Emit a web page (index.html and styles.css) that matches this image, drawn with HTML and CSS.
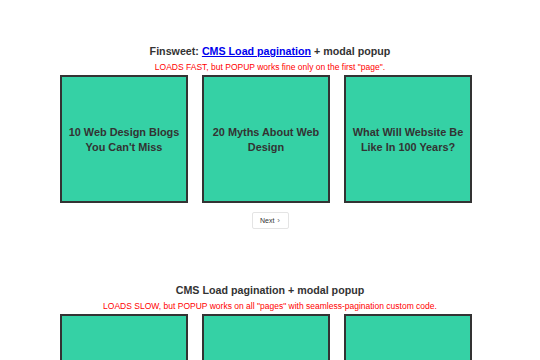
FILE: index.html
```html
<!DOCTYPE html>
<html lang="en">

<head>
    <meta charset="UTF-8">
    <meta name="viewport" content="width=device-width, initial-scale=1.0">
    <title>CMS Load pagination + modal popup</title>
    <link rel="stylesheet" href="styles.css">
</head>

<body>
    <section class="demo">
        <h2 class="demo-title">Finsweet: <a href="#">CMS Load pagination</a> + modal popup</h2>
        <p class="demo-note">LOADS FAST, but POPUP works fine only on the first "page".</p>
        <div class="card-list">
            <div class="card">10 Web Design Blogs You Can't Miss</div>
            <div class="card">20 Myths About Web Design</div>
            <div class="card">What Will Website Be Like In 100 Years?</div>
        </div>
        <div class="pager">
            <a href="#" class="pager-next">Next <span class="chev">›</span></a>
        </div>
    </section>

    <section class="demo demo-second">
        <h2 class="demo-title">CMS Load pagination + modal popup</h2>
        <p class="demo-note">LOADS SLOW, but POPUP works on all "pages" with seamless-pagination custom code.</p>
        <div class="card-list">
            <div class="card">10 Web Design Blogs You Can't Miss</div>
            <div class="card">20 Myths About Web Design</div>
            <div class="card">What Will Website Be Like In 100 Years?</div>
        </div>
    </section>
</body>

</html>
```

FILE: styles.css
```css
body {
    margin: 0;
    background-color: #ffffff;
    color: #333;
    font-family: "Liberation Sans", Arial, sans-serif;
}

.demo {
    padding-top: 43px;
}

.demo-second {
    padding-top: 53px;
}

.demo-title {
    margin: 0;
    text-align: center;
    font-size: 10.7px;
    line-height: 16px;
    font-weight: bold;
    color: #333;
}

.demo-title a {
    color: #0000ee;
    text-decoration: underline;
}

.demo-note {
    margin: 1px 0 0;
    text-align: center;
    font-size: 8.5px;
    line-height: 15px;
    color: #ff0000;
}

.card-list {
    width: 420px;
    margin: 0 auto;
    display: grid;
    grid-template-columns: repeat(3, 128px);
    column-gap: 14px;
}

.card {
    box-sizing: border-box;
    height: 128px;
    padding: 2px 6px 0;
    display: flex;
    align-items: center;
    justify-content: center;
    text-align: center;
    background-color: #35d1a5;
    border: 2px solid #333;
    font-size: 10.9px;
    line-height: 15px;
    font-weight: bold;
    color: #333;
}

.pager {
    display: flex;
    justify-content: center;
    margin-top: 9px;
}

.pager-next {
    box-sizing: border-box;
    width: 37px;
    height: 17px;
    display: flex;
    align-items: center;
    justify-content: center;
    gap: 3px;
    border: 1px solid #e4e4e4;
    border-radius: 2px;
    font-size: 7px;
    color: #333;
    text-decoration: none;
}

.chev {
    font-size: 8px;
    color: #666;
}
```
